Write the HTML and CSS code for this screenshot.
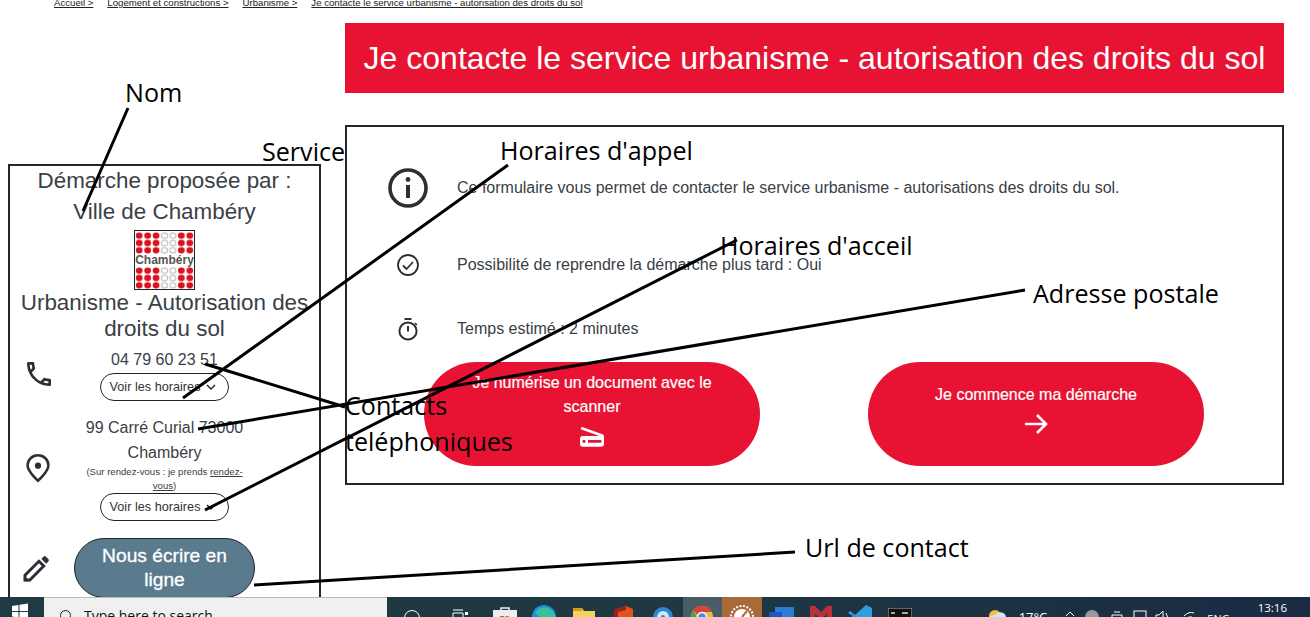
FILE: index.html
```html
<!DOCTYPE html>
<html lang="fr">
<head>
    <meta charset="UTF-8">
    <title>Je contacte le service urbanisme</title>
    <link rel="stylesheet" href="styles.css">
</head>
<body>
    <nav class="breadcrumb">
        <a href="#">Accueil &gt;</a>
        <a href="#">Logement et constructions &gt;</a>
        <a href="#">Urbanisme &gt;</a>
        <a href="#">Je contacte le service urbanisme - autorisation des droits du sol</a>
    </nav>

    <div class="page">
        <aside class="sidebar">
            <p class="by">Démarche proposée par :</p>
            <p class="by">Ville de Chambéry</p>
            <div class="logo">
                <svg class="logo-dots" viewBox="0 0 59 24" preserveAspectRatio="none"><use href="#dots"/></svg>
                <span class="logo-name">Chambéry</span>
                <svg class="logo-dots" viewBox="0 0 59 24" preserveAspectRatio="none"><use href="#dots"/></svg>
            </div>
            <h3 class="service">Urbanisme - Autorisation des droits du sol</h3>

            <div class="contact contact-phone">
                <svg class="contact-icon" width="32" height="32" viewBox="0 0 24 24"><path d="M6.54 5c.06.89.21 1.76.45 2.59l-1.2 1.2c-.41-1.2-.67-2.47-.76-3.79h1.51m9.86 12.02c.85.24 1.72.39 2.6.45v1.49c-1.32-.09-2.59-.35-3.8-.75l1.2-1.19M7.5 3H4c-.55 0-1 .45-1 1 0 9.39 7.61 17 17 17 .55 0 1-.45 1-1v-3.49c0-.55-.45-1-1-1-1.24 0-2.45-.2-3.57-.57-.1-.04-.21-.05-.31-.05-.26 0-.51.1-.71.29l-2.2 2.2c-2.83-1.45-5.15-3.76-6.59-6.59l2.2-2.2c.28-.28.36-.67.25-1.02C8.7 6.45 8.5 5.25 8.5 4c0-.55-.45-1-1-1z"/></svg>
                <div class="contact-body">
                    <p class="contact-line">04 79 60 23 51</p>
                    <button class="hours">Voir les horaires
                        <svg width="12" height="12" viewBox="0 0 12 12"><path d="M2 4l4 4 4-4" fill="none" stroke="#222" stroke-width="1.4"/></svg>
                    </button>
                </div>
            </div>

            <div class="contact contact-address">
                <svg class="contact-icon" width="28" height="30" viewBox="0 0 24 26"><path d="M12 2C6.900 2 3 5.900 3 10.800 3 16 12 24 12 24s9-8 9-13.200C21 5.900 17.100 2 12 2z" fill="none" stroke="#2c3035" stroke-width="2.2"/><circle cx="12" cy="11" r="2.700"/></svg>
                <div class="contact-body">
                    <p class="contact-line">99 Carré Curial 73000 Chambéry</p>
                    <p class="note">(Sur rendez-vous : je prends <a href="#">rendez-vous</a>)</p>
                    <button class="hours">Voir les horaires
                        <svg width="12" height="12" viewBox="0 0 12 12"><path d="M2 4l4 4 4-4" fill="none" stroke="#222" stroke-width="1.4"/></svg>
                    </button>
                </div>
            </div>

            <div class="contact contact-write">
                <svg class="contact-icon" width="29" height="29" viewBox="0 0 24 24"><path d="M2.500 21.500v-4L14 6l4 4L6.500 21.500z" fill="none" stroke="#2c3035" stroke-width="2.400"/><path d="M1.500 22.500v-5l5 5z"/><path d="M16 4l1.800-1.800a1.400 1.400 0 0 1 2 0l2 2a1.400 1.400 0 0 1 0 2L20 8z"/></svg>
                <button class="write-btn">Nous écrire en ligne</button>
            </div>
        </aside>

        <main class="main">
            <h1 class="title">Je contacte le service urbanisme - autorisation des droits du sol</h1>
            <section class="card">
                <div class="info-row info-row-first">
                    <svg class="info-icon" width="42" height="42" viewBox="0 0 42 42"><circle cx="21" cy="21" r="18" fill="none" stroke="#2c3035" stroke-width="3.600"/><circle cx="21" cy="12.500" r="2.400" fill="#2c3035"/><path d="M21 18v13" stroke="#2c3035" stroke-width="4"/></svg>
                    <p>Ce formulaire vous permet de contacter le service urbanisme - autorisations des droits du sol.</p>
                </div>
                <div class="info-row">
                    <svg class="info-icon" width="24" height="24" viewBox="0 0 24 24"><circle cx="12" cy="12" r="10" fill="none" stroke="#2c3035" stroke-width="1.800"/><path d="M7 12.500l3.500 3.500L17 9" fill="none" stroke="#2c3035" stroke-width="1.800"/></svg>
                    <p>Possibilité de reprendre la démarche plus tard : Oui</p>
                </div>
                <div class="info-row">
                    <svg class="info-icon" width="24" height="26" viewBox="0 0 24 26"><circle cx="12" cy="15" r="8.600" fill="none" stroke="#2c3035" stroke-width="2"/><path d="M8.500 3h7M12 10v5.500" fill="none" stroke="#2c3035" stroke-width="2"/><path d="M19 7l2 2" stroke="#2c3035" stroke-width="1.600"/></svg>
                    <p>Temps estimé : 2 minutes</p>
                </div>
                <div class="actions">
                    <a class="action" href="#">
                        <span>Je numérise un document avec le scanner</span>
                        <svg class="action-scan" width="32" height="32" viewBox="0 0 24 24" fill="#fff"><path d="M19.800 10.700L4.200 5l-.7 1.900L17.600 12H5c-1.100 0-2 .9-2 2v4c0 1.100.9 2 2 2h14c1.100 0 2-.9 2-2v-5.500c0-.8-.5-1.600-1.200-1.800zM7 17H5v-2h2v2zm12 0H9v-2h10v2z"/></svg>
                    </a>
                    <a class="action" href="#">
                        <span>Je commence ma démarche</span>
                        <svg class="action-arrow" width="24" height="24" viewBox="0 0 24 24"><path d="M1 12h21M13 3l9 9-9 9" fill="none" stroke="#fff" stroke-width="2.600"/></svg>
                    </a>
                </div>
            </section>
        </main>
    </div>

    <!-- annotations drawn on top of the screenshot -->
    <svg class="arrows" width="1310" height="617" viewBox="0 0 1310 617">
        <defs>
            <pattern id="dot-red" width="8.43" height="8" patternUnits="userSpaceOnUse"><circle cx="4.200" cy="4" r="3.400" fill="#d9121f"/></pattern>
            <pattern id="dot-grey" width="8.43" height="8" patternUnits="userSpaceOnUse"><circle cx="4.200" cy="4" r="3" fill="none" stroke="#b4b4b4"/></pattern>
            <g id="dots">
                <rect width="25.300" height="24" fill="url(#dot-red)"/>
                <rect x="25.300" width="16.860" height="24" fill="url(#dot-grey)"/>
                <rect x="42.150" width="16.860" height="24" fill="url(#dot-red)"/>
            </g>
        </defs>
        <path d="M128 108L83 211M508 165L183 398M737 240L205 510M1025 290L198 429M205 364L345 407M254 585L795 552" fill="none" stroke="#000" stroke-width="3"/>
    </svg>
    <span class="note-label label-nom">Nom</span>
    <span class="note-label label-service">Service</span>
    <span class="note-label label-appel">Horaires d'appel</span>
    <span class="note-label label-accueil">Horaires d'acceil</span>
    <span class="note-label label-adresse">Adresse postale</span>
    <span class="note-label label-contacts">Contacts<br>teléphoniques</span>
    <span class="note-label label-url">Url de contact</span>

    <footer class="taskbar">
        <div class="start">
            <svg width="16" height="16" viewBox="0 0 16 16" fill="#fff"><path d="M0 3l6.500-1v6H0zM7.500 1.800L16 .5V8H7.500zM0 9h6.500v5.500L0 13.500zM7.500 9H16v6.500l-8.500-1.200z"/></svg>
        </div>
        <div class="search">
            <span class="search-ring"></span>
            <span>Type here to search</span>
        </div>
        <div class="apps">
            <div class="app app-first"><span class="ring"></span></div>
            <div class="app app-view"><svg width="18" height="14" viewBox="0 0 18 14"><path d="M2 1h10M2 4h10M2 4v9M12 4v9" stroke="#fff" fill="none"/><rect x="14" y="3" width="3" height="3" fill="#fff"/></svg></div>
            <div class="app app-store"><svg width="24" height="24" viewBox="0 0 24 24"><path d="M8 5V3h8v2" fill="none" stroke="#eee" stroke-width="1.500"/><rect y="5" width="24" height="19" fill="#eee"/><rect x="7" y="11" width="4" height="4" fill="#e44"/><rect x="12" y="11" width="4" height="4" fill="#6b3"/></svg></div>
            <div class="app"><svg width="24" height="24" viewBox="0 0 24 24"><circle cx="12" cy="12" r="12" fill="#1b8fe0"/><path d="M3 8a11 11 0 0 1 20 2l0 5H12z" fill="#35c1a0"/></svg></div>
            <div class="app app-folder"><svg width="22" height="18" viewBox="0 0 22 18"><path d="M0 0h9l2 3h11v15H0z" fill="#f3d25f"/><rect width="9" height="3" fill="#d89b1d"/></svg></div>
            <div class="app app-office"><svg width="19" height="22" viewBox="0 0 19 22"><path d="M0 4l12-4 7 3v16l-7 3-12-4z" fill="#e0541f"/><path d="M0 4l12-4v4l-8 2v12l-4-1z" fill="#a3201a"/></svg></div>
            <div class="app app-blue"><svg width="20" height="20" viewBox="0 0 20 20"><circle cx="10" cy="10" r="10" fill="#2a86d0"/><circle cx="10" cy="10" r="6" fill="#cfe6f7"/><circle cx="10" cy="10" r="2" fill="#2a86d0"/></svg></div>
            <div class="app app-chrome"><svg width="22" height="22" viewBox="0 0 22 22"><circle cx="11" cy="11" r="11" fill="#e2c044"/><path d="M11 0a11 11 0 0 1 10 6H11a5 5 0 0 0-5 3L2 4a11 11 0 0 1 9-4z" fill="#dc4437"/><path d="M2 4l5 9-3 5A11 11 0 0 1 2 4z" fill="#3aa757"/><circle cx="11" cy="11" r="4.500" fill="#4a8af4" stroke="#fff" stroke-width="1.500"/></svg></div>
            <div class="app app-clock"><svg width="24" height="24" viewBox="0 0 24 24"><circle cx="12" cy="12" r="11" fill="none" stroke="#fff" stroke-width="2" stroke-dasharray="2 1.500"/><circle cx="12" cy="12" r="8" fill="#fff"/><path d="M12 12l5-6" stroke="#a86a36" stroke-width="2"/></svg></div>
            <div class="app app-word"><svg width="25" height="20" viewBox="0 0 25 20"><rect x="6" width="19" height="20" fill="#2b7cd3"/><rect y="5" width="13" height="15" fill="#185abd"/></svg></div>
            <div class="app app-mail"><svg width="22" height="18" viewBox="0 0 22 18"><path d="M0 0h5l6 6 6-6h5v18h-5V8l-6 5-6-5v10H0z" fill="#b8303a"/></svg></div>
            <div class="app app-code"><svg width="24" height="22" viewBox="0 0 24 22"><path d="M18 0l6 3v16l-6 3L7 12l-5 4-2-2 5-3-5-3 2-2 5 4z" fill="#2b9fe0"/></svg></div>
            <div class="app app-term"><svg width="24" height="18" viewBox="0 0 24 18"><rect width="24" height="18" fill="#111" stroke="#bbb"/><path d="M3 5h4M14 5h6" stroke="#ddd" stroke-width="1.500"/></svg></div>
        </div>
        <div class="tray">
            <svg class="tray-weather" width="20" height="18" viewBox="0 0 20 18"><circle cx="7" cy="7" r="6" fill="#f4bf3e"/><path d="M5 16a5 5 0 0 1 2-10 6 6 0 0 1 11 4 4 4 0 0 1-2 6z" fill="#cfe4f7"/></svg>
            <span class="tray-temp">17°C</span>
            <svg class="tray-icon tray-caret" width="12" height="8" viewBox="0 0 12 8"><path d="M2 6l4-4 4 4" fill="none" stroke="#fff"/></svg>
            <svg class="tray-icon" width="14" height="14" viewBox="0 0 14 14"><circle cx="7" cy="7" r="7" fill="#999"/><circle cx="11" cy="10" r="3" fill="#c33"/></svg>
            <svg class="tray-icon tray-usb" width="12" height="16" viewBox="0 0 12 16"><path d="M1 5h10v9H1zM3 2h6" fill="none" stroke="#fff"/></svg>
            <svg class="tray-icon tray-power" width="14" height="12" viewBox="0 0 14 12"><rect x="1" y="1" width="12" height="10" fill="none" stroke="#fff"/></svg>
            <svg class="tray-icon" width="16" height="14" viewBox="0 0 16 14"><path d="M1 5h3l4-4v12l-4-4H1zM11 3q3 4 0 8" fill="none" stroke="#fff"/></svg>
            <svg class="tray-icon" width="12" height="12" viewBox="0 0 12 12"><path d="M1 6q5-5 10-3M3 9q3-3 6-2" fill="none" stroke="#fff"/></svg>
            <span class="tray-lang">ENG</span>
            <span class="tray-time">13:16</span>
        </div>
    </footer>
</body>
</html>
```

FILE: styles.css
```css
:root {
    --red: #e81332;
    --ink: #3a4046;
    --line: #23272b;
}
html, body {
    height: 617px;
    overflow: hidden;
}
body {
    position: relative;
    margin: 0;
    background: #fff;
    color: var(--ink);
    font-family: "Liberation Sans", Arial, sans-serif;
    font-size: 16px;
}
p, h1, h3 {
    margin: 0;
    font-weight: normal;
}
svg {
    display: block;
}

/* breadcrumb, cut by the top of the shot */
.breadcrumb {
    display: flex;
    gap: 14px;
    height: 9px;
    margin-top: -1px;
    padding-left: 54px;
    font-size: 9.65px;
    line-height: 8px;
}
.breadcrumb a {
    color: #222;
}

.page {
    display: flex;
    align-items: flex-start;
    gap: 24px;
    padding-left: 8px;
}

/* left column, runs on under the taskbar */
.sidebar {
    box-sizing: border-box;
    width: 313px;
    height: 445px;
    margin-top: 156px;
    border: 2px solid var(--line);
    text-align: center;
}
.by {
    font-size: 22.4px;
    line-height: 31.2px;
    margin-top: -1px;
    margin-bottom: 1px;
}
.logo {
    box-sizing: border-box;
    width: 61px;
    height: 60px;
    margin: 3px auto 0;
    border: 1px solid #222;
    padding-top: 1px;
}
.logo-dots {
    width: 59px;
    height: 22px;
}
.logo-name {
    display: block;
    height: 13px;
    font-size: 12px;
    font-weight: bold;
    line-height: 13px;
    color: #555;
}
.service {
    margin: 0 10px;
    font-size: 22.4px;
    line-height: 26px;
}
.contact {
    display: grid;
    grid-template-columns: 64px 181px;
    align-items: center;
}
.contact-phone {
    margin-top: 5px;
}
.contact-phone .contact-line {
    margin-bottom: 1px;
}
.contact-address {
    margin-top: 14px;
}
.contact-write {
    margin-top: 17px;
}
.contact-icon {
    margin-left: 13px;
    fill: #2c3035;
}
.contact-address .contact-icon {
    margin-left: 14px;
}
.contact-write .contact-icon {
    margin-left: 12px;
}
.contact-line {
    padding: 0 10px;
    line-height: 25px;
}
.note {
    padding: 0 10px;
    font-size: 9.6px;
    line-height: 14px;
}
.note a {
    color: inherit;
}
.hours {
    display: inline-flex;
    align-items: center;
    gap: 5px;
    height: 28px;
    padding: 0 11px 0 9px;
    border: 1px solid #222;
    border-radius: 14px;
    background: #fff;
    color: #333;
    font-family: inherit;
    font-size: 12.7px;
}
.write-btn {
    height: 60px;
    padding: 0 20px;
    border: 1px solid #222;
    border-radius: 30px;
    background: #5a7a8e;
    color: #fff;
    font-family: inherit;
    font-size: 19.2px;
    line-height: 24px;
    -webkit-text-stroke: 0.3px #fff;
}

/* right column */
.main {
    width: 939px;
}
.title {
    margin-top: 15px;
    padding: 17px 0;
    background: var(--red);
    color: #fff;
    font-size: 32px;
    line-height: 36px;
    text-align: center;
}
.card {
    box-sizing: border-box;
    height: 360px;
    margin-top: 32px;
    border: 2px solid var(--line);
    padding: 0 78px 0 40px;
}
.info-row {
    display: grid;
    grid-template-columns: 42px 1fr;
    column-gap: 28px;
    align-items: center;
    height: 64px;
}
.info-row-first {
    margin-top: 29px;
    margin-bottom: 13px;
}
.info-icon {
    justify-self: center;
}
.actions {
    display: grid;
    grid-template-columns: 336px 336px;
    justify-content: space-between;
    margin: 1px 0 0 37px;
}
.action {
    display: flex;
    flex-direction: column;
    align-items: center;
    justify-content: center;
    box-sizing: border-box;
    height: 104px;
    padding: 0 40px 6px;
    border-radius: 52px;
    background: var(--red);
    color: #fff;
    line-height: 24px;
    text-align: center;
    text-decoration: none;
    -webkit-text-stroke: 0.2px #fff;
}
.action-scan {
    margin-top: 1px;
}
.action-arrow {
    margin: 5px 0 3px;
}

/* annotations */
.arrows {
    position: absolute;
    top: 0;
    left: 0;
}
.note-label {
    position: absolute;
    color: #000;
    font-family: "Open Sans", sans-serif;
    font-size: 25.1px;
    line-height: 36px;
    white-space: nowrap;
}
.label-nom { left: 125px; top: 74px; }
.label-service { left: 262px; top: 133px; }
.label-appel { left: 500px; top: 132px; }
.label-accueil { left: 720px; top: 227px; }
.label-adresse { left: 1033px; top: 275px; }
.label-contacts { left: 345px; top: 387px; }
.label-url { left: 805px; top: 529px; }

/* windows taskbar, only its top half is on the shot */
.taskbar {
    position: absolute;
    left: 0;
    right: 0;
    bottom: 0;
    display: flex;
    height: 20px;
    overflow: hidden;
    background: linear-gradient(90deg, #1f3a44, #1f3842 50%, #1a2b44);
    color: #fff;
}
.start {
    width: 44px;
    padding: 6px 0 0 12px;
    box-sizing: border-box;
}
.search {
    display: flex;
    gap: 13px;
    box-sizing: border-box;
    width: 343px;
    height: 40px;
    padding: 8px 0 0 16px;
    border-top: 1px solid #bbb;
    background: #f0f0f0;
    color: #111;
    font-family: "Open Sans", sans-serif;
    font-size: 14px;
    line-height: 19px;
}
.search-ring {
    box-sizing: border-box;
    width: 11px;
    height: 11px;
    margin-top: 4px;
    border: 1px solid #222;
    border-radius: 50%;
}
.apps {
    display: flex;
    margin-left: 5px;
}
.app {
    display: flex;
    justify-content: center;
    width: 39.5px;
    padding-top: 8px;
}
.app-first {
    width: 40px;
    padding-top: 13px;
}
.app-view {
    width: 40px;
    margin: 0 5px 0 8px;
    padding-top: 12px;
}
.app-folder { padding-top: 11px; }
.app-office { padding-top: 9px; }
.app-blue { padding-top: 10px; }
.app-chrome { padding-top: 9px; background: #4a5c66; }
.app-clock { background: #a86a36; }
.app-word { padding-top: 10px; }
.app-mail { padding-top: 9px; }
.app-term { padding-top: 11px; }
.ring {
    box-sizing: border-box;
    width: 16px;
    height: 16px;
    border: 1.5px solid #fff;
    border-radius: 50%;
}
.tray {
    display: flex;
    gap: 12px;
    margin-left: auto;
    padding-right: 23px;
    font-family: "Open Sans", sans-serif;
}
.tray-weather {
    margin-top: 12px;
}
.tray-temp {
    margin: 11px 5px 0 -1px;
    font-size: 13px;
    line-height: 18px;
}
.tray-icon {
    margin-top: 13px;
}
.tray-caret {
    margin-right: -3px;
}
.tray-usb {
    margin-right: -2px;
}
.tray-power {
    margin-right: -4px;
}
.tray-lang {
    margin-top: 14px;
    font-size: 11px;
    line-height: 15px;
}
.tray-time {
    margin: 3px 0 0 16px;
    font-size: 11.5px;
    line-height: 16px;
}
```
